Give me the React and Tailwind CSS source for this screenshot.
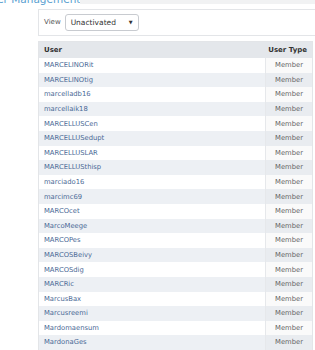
import React from "react";

const users = [
  "MARCELINORit", "MARCELINOtig", "marcelladb16", "marcellaik18", "MARCELLUSCen",
  "MARCELLUSedupt", "MARCELLUSLAR", "MARCELLUSthisp", "marciado16", "marcimc69",
  "MARCOcet", "MarcoMeege", "MARCOPes", "MARCOSBeivy", "MARCOSdig",
  "MARCRic", "MarcusBax", "Marcusreemi", "Mardomaensum", "MardonaGes",
];

export default function App() {
  return (
    <div className="w-[315px] h-[350px] overflow-hidden bg-white relative" style={{ fontFamily: '"DejaVu Sans", Verdana, sans-serif' }}>
      <div className="h-[4px] flex">
        <div className="ml-[-16px] mt-[-7px] text-[10.5px] leading-[12px] text-[#5a9fd0] whitespace-nowrap">User Management</div>
        <div className="flex-1 bg-[#f1f2f3]" />
      </div>
      <div className="ml-[38px] mt-[5px]">
        <div className="h-[27px] border-t border-b border-l border-[#e3e5e8] flex items-center pl-[5px] gap-[4px]">
          <span className="text-[7px] text-[#555]">View</span>
          <div className="w-[74px] h-[17px] border border-[#c8cbd0] rounded-[3px] flex items-center justify-between pl-[5px] pr-[5px]">
            <span className="text-[7.5px] text-[#333]">Unactivated</span>
            <span className="text-[5px] text-[#333]">▼</span>
          </div>
        </div>
        <div className="mt-[5px] w-[275px] border border-[#e3e5e8]">
          <div className="h-[16px] bg-[#e4e7eb] flex items-center text-[7px] font-bold text-[#333]">
            <div className="flex-1 pl-[5px]">User</div>
            <div className="w-[56px] text-right pr-[5px]">User Type</div>
          </div>
          {users.map((u, i) => (
            <div key={u} className={`h-[14.6px] flex items-center text-[6.8px] ${i % 2 === 1 ? "bg-[#edf0f4]" : "bg-white"}`}>
              <div className="flex-1 pl-[5px] text-[#4b6a96]">{u}</div>
              <div className={`w-[47px] h-full flex items-center justify-center text-[#666] border-l border-[#e6e8eb] ${i % 2 === 1 ? "bg-[#e9ecf0]" : "bg-[#fafafa]"}`}>Member</div>
            </div>
          ))}
        </div>
      </div>
    </div>
  );
}
